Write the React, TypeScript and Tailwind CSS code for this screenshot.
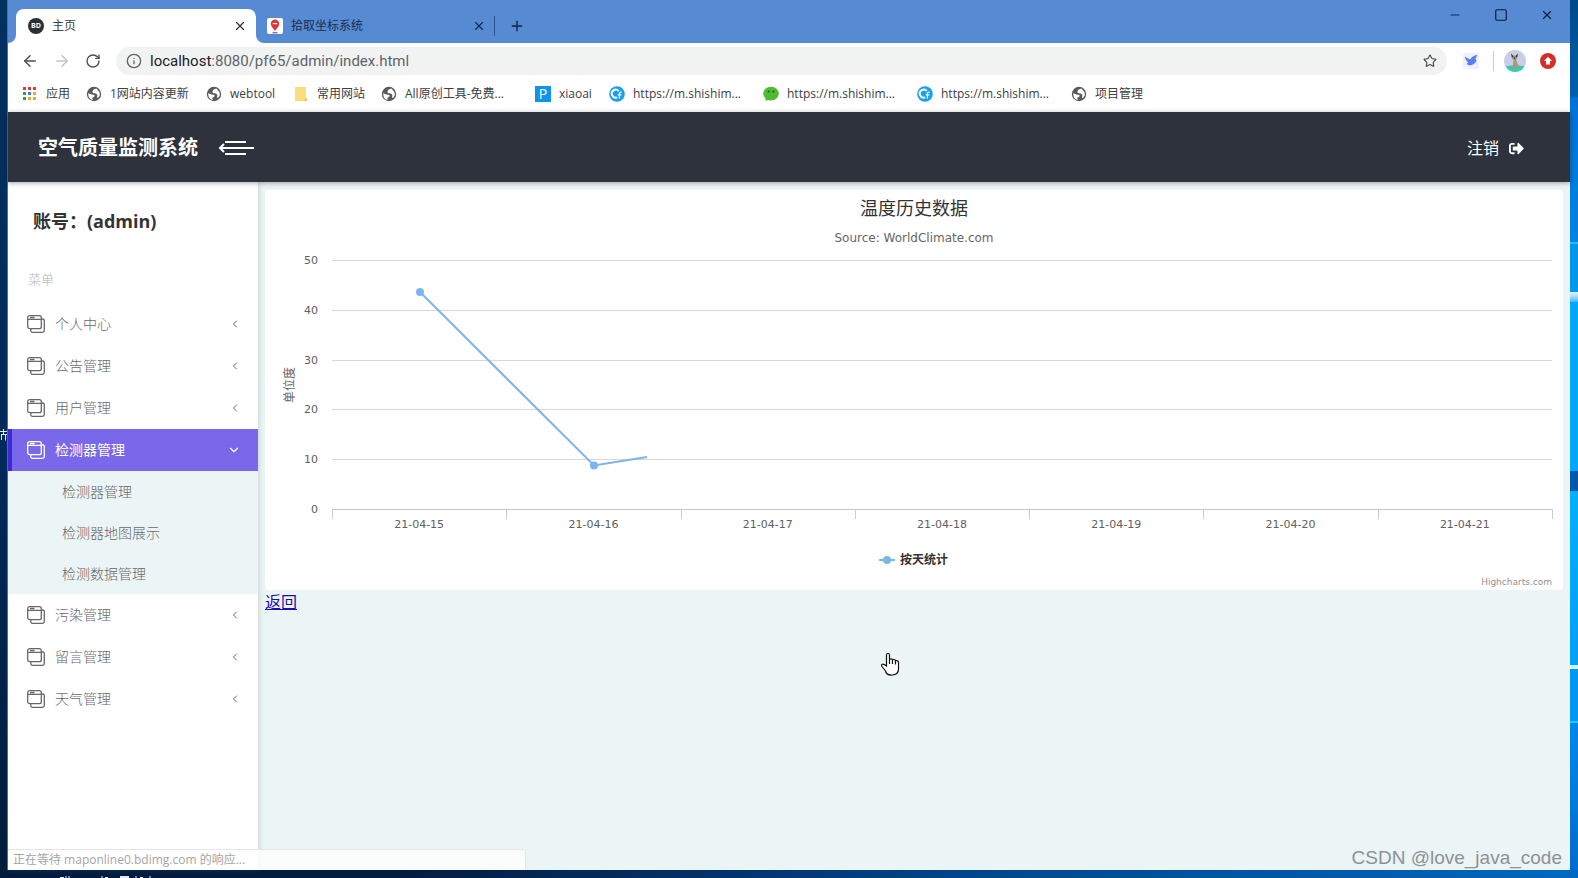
import React from "react";
import { FaSignOutAlt } from "react-icons/fa";
import {
  ArrowLeft,
  ArrowRight,
  ChevronDown,
  ChevronLeft,
  Info,
  Minus,
  Plus,
  RotateCw,
  Square,
  Star,
  X,
} from "lucide-react";

interface MenuEntry {
  label: string;
  children?: string[];
}

const MENU: MenuEntry[] = [
  { label: "个人中心" },
  { label: "公告管理" },
  { label: "用户管理" },
  { label: "检测器管理", children: ["检测器管理", "检测器地图展示", "检测数据管理"] },
  { label: "污染管理" },
  { label: "留言管理" },
  { label: "天气管理" },
];

const DAYS = ["21-04-15", "21-04-16", "21-04-17", "21-04-18", "21-04-19", "21-04-20", "21-04-21"];
const TICKS = [50, 40, 30, 20, 10, 0];

const AppsIcon = () => (
  <svg className="size-4" viewBox="0 0 16 16">
    {["#d93f35", "#d93f35", "#d93f35", "#2f9e5b", "#3f7de0", "#e0b02c", "#2f9e5b", "#e0b02c", "#e0b02c"].map(
      (fill, i) => (
        <rect key={i} x={1 + (i % 3) * 5} y={1 + Math.floor(i / 3) * 5} width="3" height="3" fill={fill} />
      )
    )}
  </svg>
);

const GlobeIcon = () => (
  <svg className="size-4" viewBox="0 0 16 16">
    <circle cx="8" cy="8" r="7.2" fill="#56595d" />
    <path
      d="M2.2 7.2 5.6 8.6 8.6 9 8.2 11 6.4 11.6 6.6 14C4 13.4 2 11 2.2 7.2ZM7.6 3.4 10.4 2.6 13.6 6.2 13.8 9.4 12 12 11 11.6 11.4 8.8 9.6 7.4 6.8 7 6.4 5.2Z"
      fill="#fff"
    />
  </svg>
);

const FolderIcon = () => (
  <svg className="size-4" viewBox="0 0 16 16">
    <path d="M2 1h11v12l1 2H2z" fill="#f8df7c" />
    <path d="M13 11l1.5 4H11z" fill="#e6c252" />
  </svg>
);

const PIcon = () => (
  <span className="flex size-4 items-center justify-center bg-[#1093ea] text-sm leading-4 text-white">P</span>
);

const CIcon = () => (
  <svg className="size-4" viewBox="0 0 16 16">
    <circle cx="8" cy="8" r="7.8" fill="#16a0ee" />
    <path d="M9.8 5A4 4 0 1 0 8.2 11.4" fill="none" stroke="#fff" strokeWidth="2" />
    <path d="M12.6 6.4Q10.4 5.8 10.4 8v4.6M8.8 8.8h3.6" fill="none" stroke="#fff" strokeWidth="1.3" />
  </svg>
);

const ChatIcon = () => (
  <svg className="size-4" viewBox="0 0 16 16">
    <ellipse cx="8" cy="7.6" rx="7.8" ry="6.8" fill="#4fbb32" />
    <path d="M3 12l-.6 3 3.6-1.6z" fill="#4fbb32" />
    <circle cx="5.6" cy="5.6" r="1" fill="#1d5f12" />
    <circle cx="10.4" cy="5.6" r="1" fill="#1d5f12" />
  </svg>
);

const BOOKMARKS = [
  { label: "应用", icon: AppsIcon, width: "w-16" },
  { label: "1网站内容更新", icon: GlobeIcon, width: "w-30" },
  { label: "webtool", icon: GlobeIcon, width: "w-[87px]" },
  { label: "常用网站", icon: FolderIcon, width: "w-22" },
  { label: "All原创工具-免费...", icon: GlobeIcon, width: "w-[154px]" },
  { label: "xiaoai", icon: PIcon, width: "w-[74px]" },
  { label: "https://m.shishim...", icon: CIcon, width: "w-[154px]" },
  { label: "https://m.shishim...", icon: ChatIcon, width: "w-[154px]" },
  { label: "https://m.shishim...", icon: CIcon, width: "w-[154px]" },
  { label: "项目管理", icon: GlobeIcon, width: "w-22" },
];

const TabBar = () => (
  <div className="flex h-[43px] items-end bg-[#568ad2]">
    <div className="flex h-[34px] w-[248px] items-end">
      <span className="size-2 bg-white">
        <span className="block size-2 rounded-br-lg bg-[#568ad2]" />
      </span>
      <div className="flex h-full flex-1 items-center gap-2 rounded-t-lg bg-white pr-[7px] pl-3">
        <span className="flex size-4 items-center justify-center rounded-full bg-[#2c2f38] text-[7px] font-bold text-white">
          BD
        </span>
        <span className="flex-1 text-xs text-[#3c4043]">主页</span>
        <button aria-label="关闭" className="p-0.5">
          <X className="size-3.5 text-[#333]" />
        </button>
      </div>
    </div>
    <div className="flex h-[34px] w-[238px] items-end">
      <span className="size-2 bg-white">
        <span className="block size-2 rounded-bl-lg bg-[#568ad2]" />
      </span>
      <div className="flex h-full flex-1 items-center gap-2 pr-1.5 pl-[3px]">
        <svg className="size-4" viewBox="0 0 16 16">
          <rect width="16" height="16" rx="2" fill="#fff" />
          <path d="M8 13C5 9.4 3.8 8 3.8 5.8a4.2 4.2 0 0 1 8.4 0C12.200 8 11 9.4 8 13z" fill="#e03636" />
          <path d="M5.8 5.6h4.4" stroke="#fff" strokeWidth="1.2" />
          <path d="M5.5 14.800h5" stroke="#3b3f9c" strokeWidth="1" />
        </svg>
        <span className="flex-1 text-xs text-[#1b2f4c]">拾取坐标系统</span>
        <button aria-label="关闭" className="p-0.5">
          <X className="size-3.5 text-[#16294a]" />
        </button>
      </div>
    </div>
    <div className="flex h-[34px] flex-1 items-center">
      <span className="h-5 w-px bg-[#2f5288]" />
      <button aria-label="新标签页" className="ml-3 p-0.5">
        <Plus className="size-4 text-[#10203c]" />
      </button>
    </div>
    <div className="flex h-full items-start gap-8 pt-2 pr-4">
      <button aria-label="最小化">
        <Minus className="size-3.5 text-[#0b1b3a]" strokeWidth={1.5} />
      </button>
      <button aria-label="最大化">
        <Square className="size-3.5 text-[#0b1b3a]" strokeWidth={2} />
      </button>
      <button aria-label="关闭窗口">
        <X className="size-3.5 text-[#0b1b3a]" strokeWidth={2} />
      </button>
    </div>
  </div>
);

const AddressBar = () => (
  <div className="flex h-9 items-center bg-white pr-3.5 pl-[13px]">
    <div className="flex w-[95px] items-center gap-3.5">
      <button aria-label="后退">
        <ArrowLeft className="size-[18px] text-[#4b4e52]" />
      </button>
      <button aria-label="前进">
        <ArrowRight className="size-[18px] text-[#c0c3c6]" />
      </button>
      <button aria-label="刷新">
        <RotateCw className="size-4 text-[#4b4e52]" />
      </button>
    </div>
    <div className="flex h-7 flex-1 items-center gap-2 rounded-full bg-[#f1f3f3] pr-2.5 pl-2.5">
      <Info className="size-4 text-[#5f6368]" />
      <span className="flex-1 font-['Roboto',sans-serif] text-[15px] text-[#5f6368]">
        <span className="text-[#202124]">localhost</span>:8080/pf65/admin/index.html
      </span>
      <button aria-label="收藏">
        <Star className="size-3.5 text-[#4b4e52]" />
      </button>
    </div>
    <svg className="ml-4 size-4" viewBox="0 0 16 16">
      <rect width="16" height="16" rx="2" fill="#eef0fd" />
      <path d="M1.5 3.500 7 6.5Q10 2 14.5 2L12.500 5.5 13.500 8Q11 12 6.500 12.500L3.500 11 5 9.500Q2.500 7 1.500 3.500Z" fill="#5f7df0" />
    </svg>
    <span className="mr-2.5 ml-3.5 h-5 w-px bg-[#c9cbce]" />
    <svg className="size-[22px]" viewBox="0 0 22 22">
      <circle cx="11" cy="11" r="11" fill="#c9cdea" />
      <path d="M1.500 16.500Q11 14 20.500 16.500A11 11 0 0 1 1.500 16.500Z" fill="#3cc9ae" />
      <path d="M7 3.500 9.500 5.500h2L14 3.500 13 8.500 12 10 14.500 15.500V18H8.500L9.500 10 8 8.500Z" fill="#a3977d" />
      <path d="M7 3.500 9.500 6.500 8 7.500ZM14 3.500 11.500 6.500 13 7.500ZM9.500 7.500h2L10.500 9.500Z" fill="#34322f" />
    </svg>
    <svg className="ml-3.5 size-4" viewBox="0 0 16 16">
      <circle cx="8" cy="8" r="8" fill="#d3302a" />
      <path d="M8 3.800 12 8H10v3.500H6V8H4z" fill="#fff" />
    </svg>
  </div>
);

const BookmarkBar = () => (
  <nav className="flex h-[33px] items-center overflow-hidden bg-white pb-1 pl-3.5">
    {BOOKMARKS.map(({ label, icon: Icon, width }, i) => (
      <a key={i} href="#" className={`flex shrink-0 items-center gap-2 ${width}`}>
        <Icon />
        <span className="text-xs whitespace-nowrap text-[#3c4043]">{label}</span>
      </a>
    ))}
  </nav>
);

const StackIcon = () => (
  <svg className="size-[18px]" viewBox="0 0 18 18" fill="none" stroke="currentColor" strokeWidth="1.3">
    <rect x="0.7" y="0.7" width="13.6" height="13" rx="2" />
    <path d="M0.7 4.3h13.600M3 2.500h4.500" />
    <path d="M14.500 4h1.300a1.500 1.500 0 0 1 1.500 1.500v10a1.800 1.800 0 0 1-1.800 1.800H5.300a1.500 1.500 0 0 1-1.500-1.500v-2" />
  </svg>
);

const Header = () => (
  <header className="relative z-10 flex h-[70px] items-center bg-[#2e323d] pt-0.5 pr-[46px] pl-[30px] text-white shadow-[0_1px_5px_rgba(0,0,0,0.35)]">
    <h1 className="text-xl font-bold">空气质量监测系统</h1>
    <button aria-label="折叠菜单" className="ml-5">
      <svg className="h-4 w-9" viewBox="0 0 36 16" fill="none" stroke="#fff" strokeWidth="2">
        <path d="M7 2h21M2 8h34M7 14h21" />
        <path d="M6 4 2 8 6 12" />
      </svg>
    </button>
    <a href="#" className="ml-auto flex items-center gap-2.5 text-base">
      注销
      <FaSignOutAlt className="size-[15px]" />
    </a>
  </header>
);

const Sidebar = () => (
  <aside className="w-[250px] shrink-0 bg-white shadow-[1px_0_5px_rgba(90,120,120,0.25)]">
    <p className="pt-[23px] pl-[25px] text-lg leading-8 font-bold text-[#333]">账号：(admin)</p>
    <p className="mt-[30px] mb-3 pl-5 text-[13px] leading-6 font-light text-[#b4b4b4]">菜单</p>
    <ul>
      {MENU.map((item) => (
        <li key={item.label}>
          <button
            className={
              item.children
                ? "flex h-[42px] w-full items-center gap-2.5 border-l-4 border-[#4027de] bg-[#7a68ea] pr-[17px] pl-[15px] text-white"
                : "flex h-[42px] w-full items-center gap-2.5 border-l-4 border-transparent pr-[17px] pl-[15px] font-light text-[#686868]"
            }
          >
            <StackIcon />
            <span className="flex-1 text-left text-sm">{item.label}</span>
            {item.children ? <ChevronDown className="size-3.5" /> : <ChevronLeft className="size-3 text-[#666]" />}
          </button>
          {item.children && (
            <ul className="bg-[#ebf5f5]">
              {item.children.map((child) => (
                <li key={child}>
                  <a href="#" className="flex h-[41px] items-center pl-[54px] text-sm font-light text-[#686868]">
                    {child}
                  </a>
                </li>
              ))}
            </ul>
          )}
        </li>
      ))}
    </ul>
  </aside>
);

const HistoryChart = () => {
  const left = 67;
  const right = 1287;
  const step = (right - left) / DAYS.length;
  const yOf = (v: number) => Math.round(319 - v * 4.98) + 0.5;

  return (
    <svg
      viewBox="0 0 1298 400"
      className="block h-auto w-full rounded-sm bg-white font-['DejaVu_Sans','Noto_Sans_CJK_SC',sans-serif]"
      role="img"
      aria-label="温度历史数据"
    >
      <text x="649" y="25" textAnchor="middle" className="fill-[#333] font-['Noto_Sans_CJK_SC',sans-serif] text-lg">
        温度历史数据
      </text>
      <text x="649" y="52" textAnchor="middle" className="fill-[#666] text-xs">
        Source: WorldClimate.com
      </text>

      {TICKS.map((v) => (
        <g key={v}>
          <path d={`M${left} ${yOf(v)}H${right}`} stroke={v === 0 ? "#c0c8d0" : "#d8d8d8"} />
          <text x={left - 14} y={yOf(v) + 3} textAnchor="end" className="fill-[#606060] text-[11px]">
            {v}
          </text>
        </g>
      ))}
      <text
        transform="translate(29 195) rotate(-90)"
        textAnchor="middle"
        className="fill-[#666] font-['Noto_Sans_CJK_SC',sans-serif] text-xs"
      >
        单位度
      </text>

      {[...DAYS, ""].map((day, i) => (
        <g key={i}>
          <path d={`M${Math.round(left + i * step) + 0.5} 319v10`} stroke="#c8ced6" />
          <text x={left + (i + 0.5) * step} y="338" textAnchor="middle" className="fill-[#606060] text-[11px]">
            {day}
          </text>
        </g>
      ))}

      <path d="M155 102 329 275.5 382 267" fill="none" stroke="#7cb5ec" strokeWidth="2" />
      <circle cx="155" cy="102" r="4" fill="#7cb5ec" />
      <circle cx="329" cy="275.5" r="4" fill="#7cb5ec" />

      <path d="M614 370h16" stroke="#7cb5ec" strokeWidth="2" />
      <circle cx="622" cy="370" r="4" fill="#7cb5ec" />
      <text x="635" y="374" className="fill-[#333] font-['Noto_Sans_CJK_SC',sans-serif] text-xs font-bold">
        按天统计
      </text>
      <text x="1287" y="395" textAnchor="end" className="fill-[#909090] text-[9px]">
        Highcharts.com
      </text>
    </svg>
  );
};

const HandCursor = () => (
  <svg className="absolute top-[652px] left-[880px] h-6 w-5" viewBox="0 0 20 24">
    <path
      d="M6.5 14V3Q6.5 1.5 8 1.5T9.5 3V7.5Q9.5 6.8 11 6.8T12.500 8.3Q12.5 7.5 14 7.5T15.5 9Q15.5 8.3 17 8.6T18.5 10.5V17Q18.5 22.5 12.5 23T5.5 19L2 14.5Q1 12.8 2.3 12.2T6.5 14ZM9.5 7v5M12.5 8v4M15.5 9v3.5"
      fill="#fff"
      stroke="#111"
      strokeWidth="1.2"
    />
  </svg>
);

export default function App() {
  return (
    <div className="relative flex min-h-screen flex-col overflow-hidden bg-linear-to-r from-[#021c40] from-25% via-[#024488] via-60% to-[#0068c0] font-['Open_Sans','Noto_Sans_CJK_SC',sans-serif]">
      <div className="flex flex-1">
        <div className="flex w-2 flex-col justify-center border-r border-[#3d72a8] bg-linear-to-b from-[#02305f] via-[#012a5c] to-[#011c3c]">
          {/* edge of a desktop icon caption */}
          <svg className="h-3 w-[7px]" viewBox="0 0 7 12" fill="none" stroke="#e4eaf2">
            <path d="M0 2.500h7M1 5.500h6M3.500 0v5M1.500 6v5M5.500 6v5.500" />
          </svg>
        </div>
        <div className="flex min-w-0 flex-1 flex-col">
          <TabBar />
          <AddressBar />
          <BookmarkBar />
          <Header />
          <div className="relative flex flex-1 bg-[#ebf5f5]">
            <Sidebar />
            <main className="min-w-0 flex-1 px-[7px] pt-2">
              <HistoryChart />
              <a href="#" className="text-base leading-[22px] text-[#1a0dab] underline">
                返回
              </a>
            </main>
            <div className="absolute bottom-0 left-0 flex h-[21px] w-[518px] items-center rounded-tr border-t border-r border-[#e3e6e6] bg-white/80 pl-[5px] text-xs text-[#a5a5a5]">
              正在等待 maponline0.bdimg.com 的响应...
            </div>
          </div>
        </div>
        <div className="flex w-2 flex-col">
          <div className="h-[97px] bg-linear-to-b from-[#004a88] to-[#0060ac]" />
          <div className="h-[145px] bg-linear-to-b from-[#0070d8] to-[#0084e4]" />
          <div className="h-0.5 bg-[#20c0f8]" />
          <div className="h-12 bg-[#0098ec]" />
          <div className="h-2.5 bg-linear-to-b from-[#e8f8ff] to-[#30b8f8]" />
          <div className="h-[169px] bg-[#00a8f8]" />
          <div className="h-5 bg-[#0058a8]" />
          <div className="h-[174px] bg-linear-to-b from-[#00b0ff] to-[#00a0f8]" />
          <div className="h-1 bg-[#d0f4ff]" />
          <div className="h-[52px] bg-[#0098f4]" />
          <div className="h-0.5 bg-[#10d0f4]" />
          <div className="flex-1 bg-linear-to-b from-[#0088ec] to-[#006cd0]" />
        </div>
      </div>
      <div className="h-2 pl-14">
        <svg className="h-2 w-25" viewBox="0 0 100 8" fill="none" stroke="#e4eaf2">
          <path d="M4 7.500h4M10 6v2M13 6v2M46 6v2M49 7.500h3M64 6.500h9M64 7.500h9M80 6v2M84 7.500h3M94 6v2" />
        </svg>
      </div>
      <HandCursor />
      <span className="absolute right-4 bottom-1.5 font-['Liberation_Sans',sans-serif] text-[19px] text-[#8d9294]">
        CSDN @love_java_code
      </span>
    </div>
  );
}
